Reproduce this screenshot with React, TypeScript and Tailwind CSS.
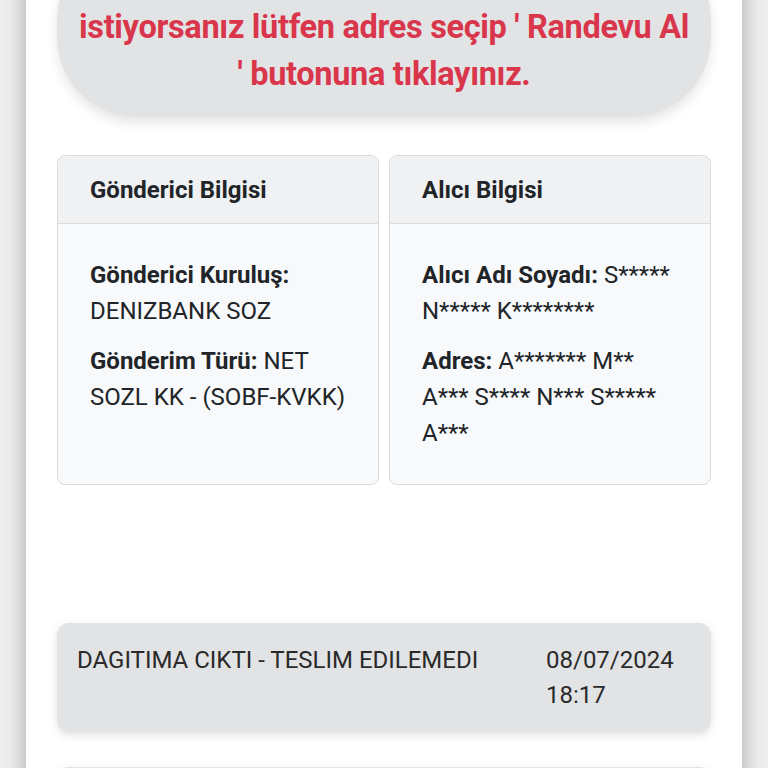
import React from "react";

type Field = { label: string; value: string };

const senderFields: Field[] = [
  { label: "Gönderici Kuruluş:", value: "DENIZBANK SOZ" },
  { label: "Gönderim Türü:", value: "NET SOZL KK - (SOBF-KVKK)" },
];

const receiverFields: Field[] = [
  { label: "Alıcı Adı Soyadı:", value: "S***** N***** K********" },
  { label: "Adres:", value: "A******* M** A*** S**** N*** S***** A***" },
];

const movements = [
  { status: "DAGITIMA CIKTI - TESLIM EDILEMEDI", date: "08/07/2024", time: "18:17" },
  { status: "DAGITIMA CIKTI", date: "08/07/2024", time: "09:42" },
];

function InfoCard({ title, fields }: { title: string; fields: Field[] }) {
  return (
    <div className="flex flex-col overflow-hidden rounded-[8px] border border-[#dcdcdc] bg-[#f8f9fa]">
      <div className="flex h-[68px] items-center border-b border-[#dcdcdc] bg-[#f0f1f2] px-[32px]">
        <h5 className="text-[24px] font-bold text-[#212529]">{title}</h5>
      </div>
      <div className="flex flex-1 flex-col gap-[14px] px-[32px] pb-[33px] pt-[33px]">
        {fields.map((f) => (
          <p key={f.label} className="text-[24px] leading-[36px] text-[#212529]">
            <span className="font-bold">{f.label}</span> {f.value}
          </p>
        ))}
      </div>
    </div>
  );
}

export default function App() {
  return (
    <div
      className="min-h-screen overflow-hidden bg-[#efefef] px-[26px]"
      style={{ fontFamily: "Roboto, 'Liberation Sans', sans-serif" }}
    >
      <div className="min-h-[800px] bg-white px-[31px] pb-[40px] shadow-[0_0_22px_rgba(0,0,0,0.3)]">
        <div className="-mt-[60px] rounded-[80px] bg-[#e2e3e5] px-[12px] pb-[19px] pt-[64px] text-center shadow-[0_6px_12px_rgba(0,0,0,0.1)]">
          <p className="text-[32.5px] font-bold leading-[47px] tracking-[-0.01em] text-[#d9364b]">
            istiyorsanız lütfen adres seçip ' Randevu Al
            <br />' butonuna tıklayınız.
          </p>
        </div>

        <div className="mt-[38px] grid grid-cols-2 gap-[10px]">
          <InfoCard title="Gönderici Bilgisi" fields={senderFields} />
          <InfoCard title="Alıcı Bilgisi" fields={receiverFields} />
        </div>

        <div className="mt-[138px] flex flex-col gap-[35px]">
          {movements.map((m) => (
            <div
              key={m.time}
              className="flex rounded-[12px] bg-[#e2e3e5] px-[20px] pb-[19px] pt-[20px] text-[24px] leading-[35px] text-[#2a2a2a] shadow-[0_3px_8px_rgba(0,0,0,0.12)]"
            >
              <div className="flex-1">{m.status}</div>
              <div className="w-[145px]">
                <div>{m.date}</div>
                <div>{m.time}</div>
              </div>
            </div>
          ))}
        </div>
      </div>
    </div>
  );
}
